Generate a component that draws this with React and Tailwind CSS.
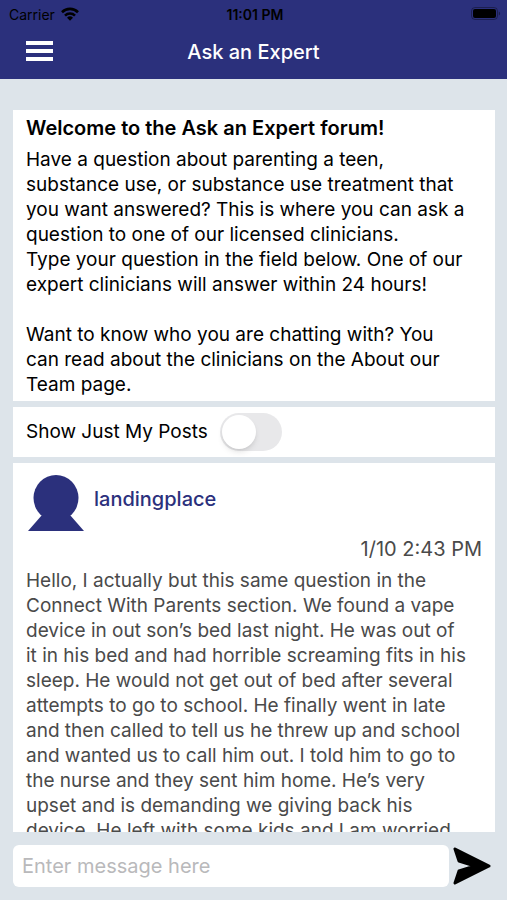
import React, { useState } from 'react';

const INTRO = `Have a question about parenting a teen,
substance use, or substance use treatment that
you want answered? This is where you can ask a
question to one of our licensed clinicians.
Type your question in the field below. One of our
expert clinicians will answer within 24 hours!

Want to know who you are chatting with? You
can read about the clinicians on the About our
Team page.`;

const posts = [
  {
    id: 1,
    author: 'landingplace',
    date: '1/10 2:43 PM',
    body: `Hello, I actually but this same question in the
Connect With Parents section. We found a vape
device in out son’s bed last night. He was out of
it in his bed and had horrible screaming fits in his
sleep. He would not get out of bed after several
attempts to go to school. He finally went in late
and then called to tell us he threw up and school
and wanted us to call him out. I told him to go to
the nurse and they sent him home. He’s very
upset and is demanding we giving back his
device. He left with some kids and I am worried`,
  },
];

const WifiIcon = () => (
  <svg viewBox="0 0 18 14" className="w-[18px] h-[14px]" fill="none" stroke="currentColor" strokeWidth="2.6">
    <path d="M1 5.2a11.4 11.4 0 0 1 16 0" />
    <path d="M4 8.6a7.1 7.1 0 0 1 10 0" />
    <path d="M9 13.8 6 10.8a4.3 4.3 0 0 1 6 0Z" fill="currentColor" stroke="none" />
  </svg>
);

const BatteryIcon = () => (
  <svg viewBox="0 0 30 14" className="w-[30px] h-[14px]">
    <rect x="0.5" y="0.5" width="26" height="12" rx="3.5" fill="none" stroke="#000" strokeOpacity="0.35" />
    <rect x="2" y="2" width="23" height="9" rx="2" fill="#000" />
    <path d="M27.8 4.5c1.8.6 1.8 3.4 0 4Z" fill="#000" fillOpacity="0.4" />
  </svg>
);

const StatusBar = () => (
  <div className="grid grid-cols-3 items-center h-7 pl-[9px] pr-[6px] text-[14px] text-black">
    <div className="flex items-center gap-[6px]">
      <span>Carrier</span>
      <WifiIcon />
    </div>
    <span className="text-center font-semibold">11:01 PM</span>
    <div className="flex justify-end">
      <BatteryIcon />
    </div>
  </div>
);

const Header = () => (
  <header className="shrink-0 bg-[#2b307c]">
    <StatusBar />
    <div className="grid grid-cols-[1fr_auto_1fr] items-center h-[51px] pb-[6px] px-[26px]">
      <button type="button" aria-label="Menu" className="flex flex-col gap-1 w-[27px]">
        <span className="h-[4px] w-full bg-white" />
        <span className="h-[4px] w-full bg-white" />
        <span className="h-[4px] w-full bg-white" />
      </button>
      <h1 className="pt-[2px] text-[20px] font-medium text-white">Ask an Expert</h1>
    </div>
  </header>
);

const Avatar = () => (
  <svg viewBox="0 0 56 56" className="w-14 h-14 shrink-0" fill="#2b307c">
    <ellipse cx="28" cy="23" rx="22.5" ry="23" />
    <path d="M14 40 0 56h56L42 40Z" />
  </svg>
);

const Post = ({ post }) => (
  <article className="bg-white px-[13px] pt-3">
    <div className="flex items-center gap-[10px] pl-[2px]">
      <Avatar />
      <a href="#" className="text-[20px] leading-[25px] font-medium text-[#2b307c] pb-2">{post.author}</a>
    </div>
    <p className="mt-[6px] text-right text-[20px] leading-[25px] text-[#4a4a4a]">{post.date}</p>
    <p className="mt-[6px] whitespace-pre-line text-[19px] leading-[25px] text-[#4a4a4a]">{post.body}</p>
  </article>
);

const App = () => {
  const [onlyMine, setOnlyMine] = useState(false);
  const [message, setMessage] = useState('');

  return (
    <div className="flex flex-col h-screen bg-[#dde4ea] font-['Inter',sans-serif] text-black">
      <Header />

      <main className="flex-1 min-h-0 overflow-y-auto [scrollbar-width:none] flex flex-col gap-[6px] pt-[31px] pl-[13px] pr-3">
        <section className="shrink-0 bg-white px-[13px] pt-[6px] pb-1">
          <h2 className="text-[20px] leading-[25px] font-semibold">Welcome to the Ask an Expert forum!</h2>
          <p className="mt-[6px] whitespace-pre-line text-[19px] leading-[25px]">{INTRO}</p>
        </section>

        <label className="shrink-0 flex items-center gap-3 h-[50px] bg-white px-[13px] text-[19px]">
          Show Just My Posts
          <input
            type="checkbox"
            role="switch"
            checked={onlyMine}
            onChange={(e) => setOnlyMine(e.target.checked)}
            className="appearance-none w-[62px] h-[38px] rounded-full bg-[#e8e8ea] checked:bg-[#2b307c] p-[2px] flex before:content-[''] before:w-[34px] before:h-[34px] before:rounded-full before:bg-white before:shadow-md checked:justify-end"
          />
        </label>

        {posts.map((post) => (
          <Post key={post.id} post={post} />
        ))}
      </main>

      <form
        onSubmit={(e) => e.preventDefault()}
        className="shrink-0 flex items-center gap-1 py-[13px] pl-[13px] pr-[15px]"
      >
        <input
          type="text"
          aria-label="Message"
          placeholder="Enter message here"
          value={message}
          onChange={(e) => setMessage(e.target.value)}
          className="flex-1 min-w-0 h-[42px] rounded-md bg-white px-[9px] text-[20px] placeholder:text-[#b9b9bb] outline-none"
        />
        <button type="submit" aria-label="Send">
          <svg viewBox="0 0 39 38" className="w-[39px] h-[38px]" fill="#000" stroke="#000" strokeWidth="3" strokeLinejoin="round">
            <path d="M2 2 36 19 2 36 6 24 22 19 6 14Z" />
          </svg>
        </button>
      </form>
    </div>
  );
};

export default App;
